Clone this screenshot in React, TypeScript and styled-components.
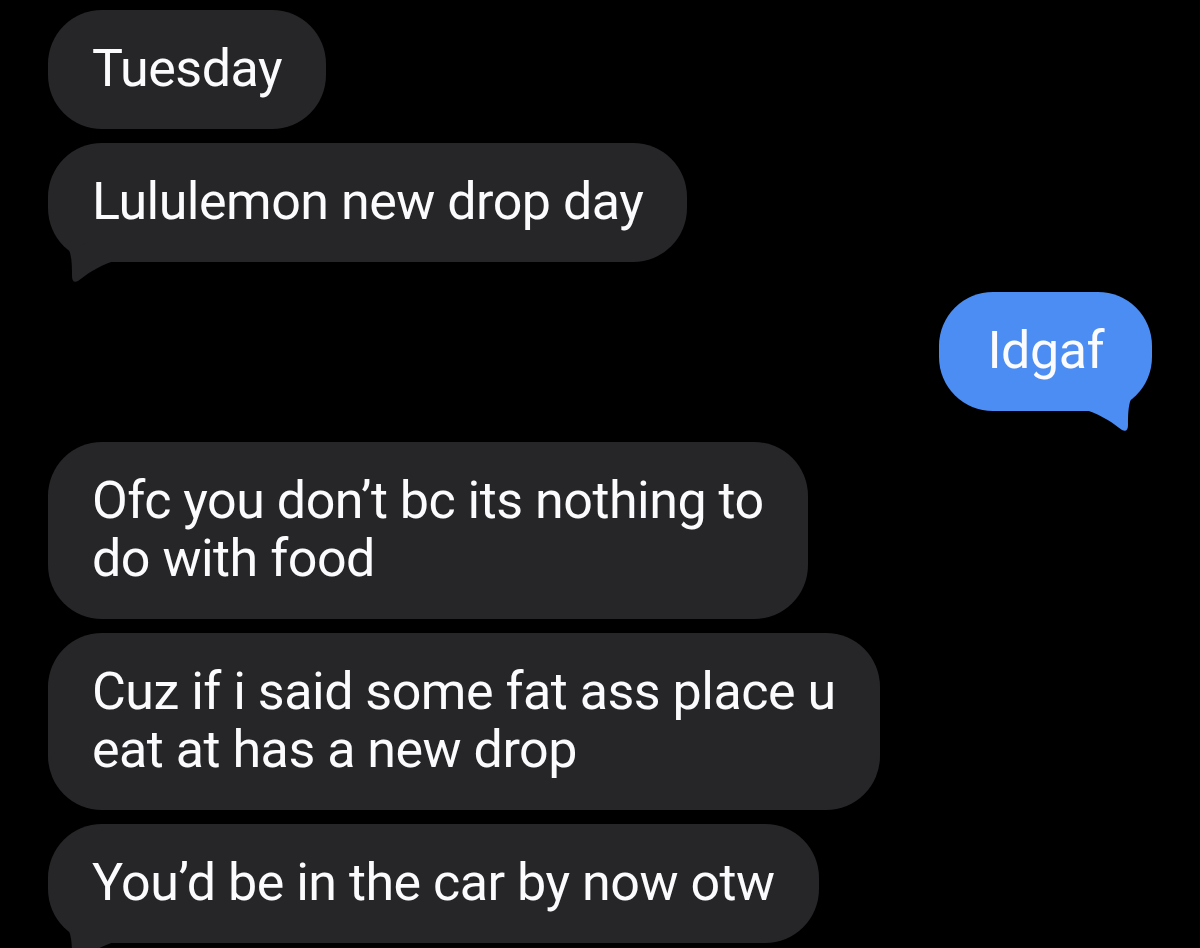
import React from 'react';
import styled, { createGlobalStyle } from 'styled-components';

const GlobalStyle = createGlobalStyle`
  html, body {
    margin: 0;
    padding: 0;
    background: #000;
    overflow: hidden;
  }
  body {
    font-family: Roboto, "Liberation Sans", Arial, sans-serif;
    -webkit-font-smoothing: antialiased;
  }
`;

const GRAY = '#262629';
const BLUE = '#4b8df3';

// --- Styled Components ---
const Thread = styled.main`
  display: flex;
  flex-direction: column;
  padding: 10px 48px 0;
  height: 948px;
  box-sizing: border-box;
`;

const Group = styled.section<{ $out?: boolean; $space?: number }>`
  display: flex;
  flex-direction: column;
  align-items: ${({ $out }) => ($out ? 'flex-end' : 'flex-start')};
  gap: 14px;
  margin-top: ${({ $space }) => $space ?? 0}px;
`;

const Bubble = styled.div<{ $out?: boolean }>`
  position: relative;
  box-sizing: border-box;
  padding: 30px ${({ $out }) => ($out ? 48 : 44)}px 31px;
  border-radius: 54px;
  background: ${({ $out }) => ($out ? BLUE : GRAY)};
  color: #fbfbfd;
  font-size: 52px;
  font-weight: 400;
  letter-spacing: -0.5px;
  line-height: 58px;
  white-space: pre-line;
`;

const Tail = styled.svg<{ $out?: boolean }>`
  position: absolute;
  bottom: -21px;
  ${({ $out }) => ($out ? 'right: 0; transform: scaleX(-1);' : 'left: 0;')}
  width: 70px;
  height: 61px;
  pointer-events: none;
`;

const BubbleTail = ({ out }: { out?: boolean }) => (
  <Tail $out={out} viewBox="0 0 70 61" aria-hidden>
    <path
      d="M40 20 L21 28 C24 35 24 46 24 54 C24 59 26 61 30 59 C38 53 48 45 66 39 L66 20 Z"
      fill={out ? BLUE : GRAY}
    />
  </Tail>
);

type Msg = { text: string; tail?: boolean };

const Message = ({ msg, out }: { msg: Msg; out?: boolean }) => (
  <Bubble $out={out}>
    {msg.text}
    {msg.tail && <BubbleTail out={out} />}
  </Bubble>
);

const groups: { out?: boolean; space: number; messages: Msg[] }[] = [
  {
    space: 0,
    messages: [
      { text: 'Tuesday' },
      { text: 'Lululemon new drop day', tail: true },
    ],
  },
  {
    out: true,
    space: 30,
    messages: [{ text: 'Idgaf', tail: true }],
  },
  {
    space: 31,
    messages: [
      { text: 'Ofc you don’t bc its nothing to\ndo with food' },
      { text: 'Cuz if i said some fat ass place u\neat at has a new drop' },
      { text: 'You’d be in the car by now otw', tail: true },
    ],
  },
];

const App = () => (
  <>
    <GlobalStyle />
    <Thread>
      {groups.map((g, i) => (
        <Group key={i} $out={g.out} $space={g.space}>
          {g.messages.map((m, j) => (
            <Message key={j} msg={m} out={g.out} />
          ))}
        </Group>
      ))}
    </Thread>
  </>
);

export default App;
